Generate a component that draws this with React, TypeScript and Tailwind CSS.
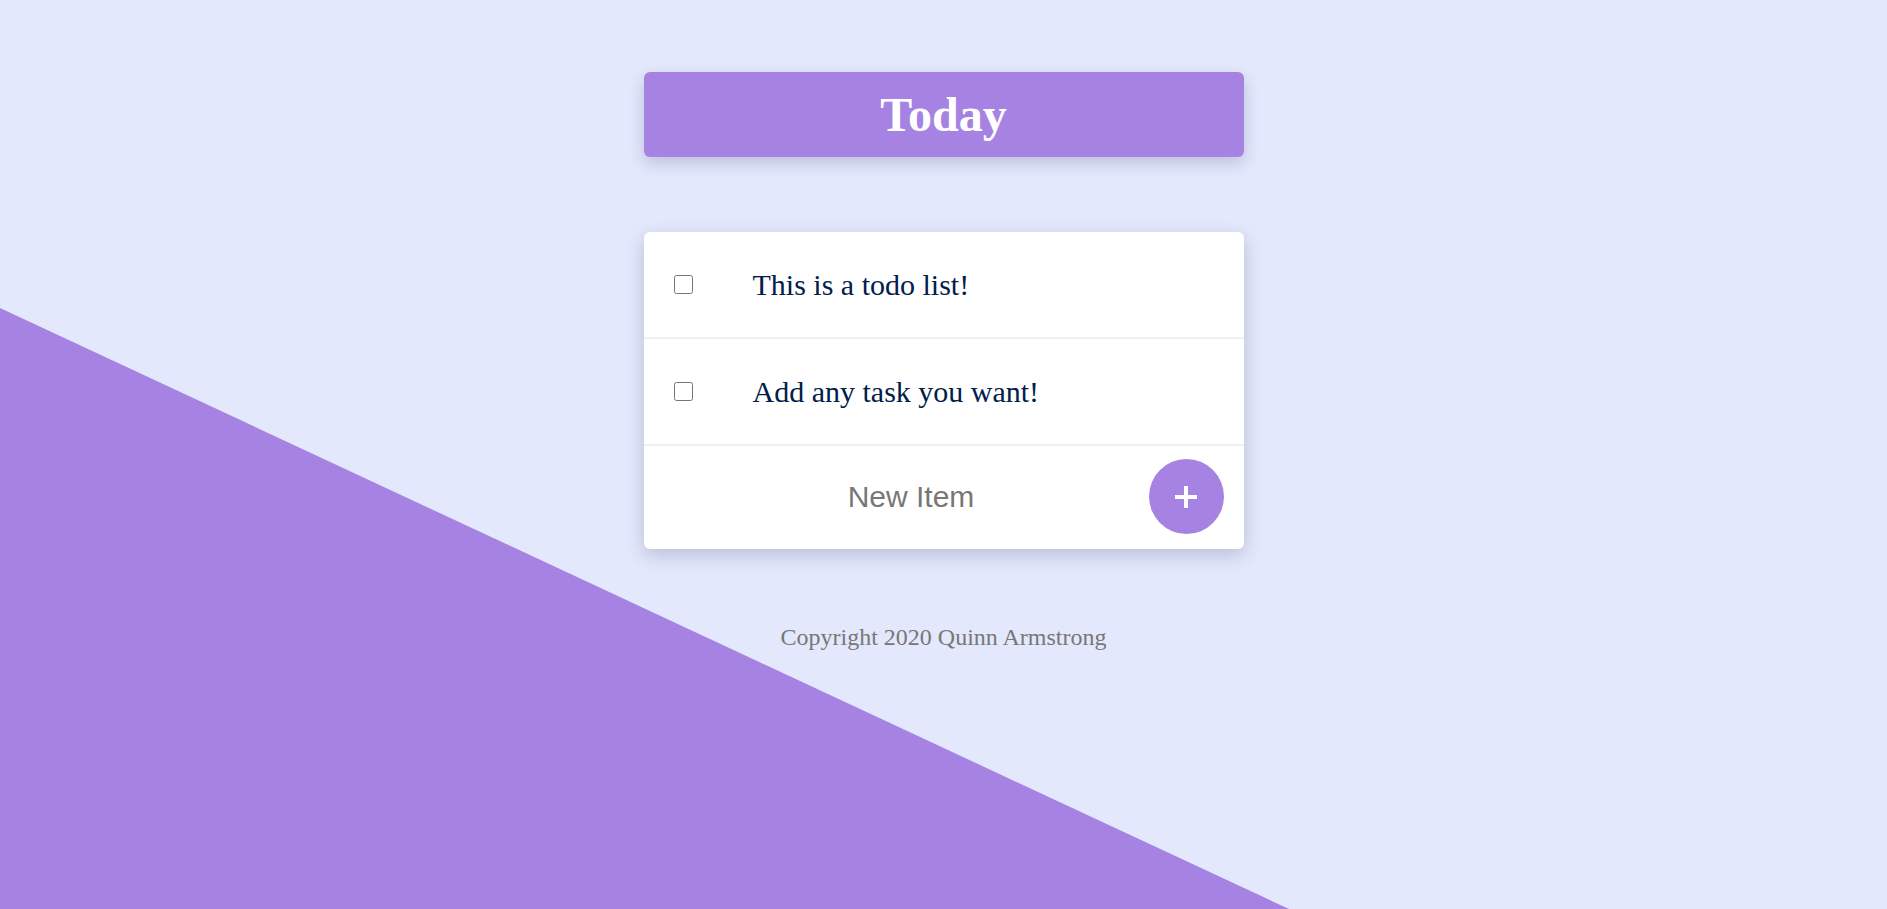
import { useState } from "react";

type Todo = { id: number; text: string; done: boolean };

const initial: Todo[] = [
  { id: 1, text: "This is a todo list!", done: false },
  { id: 2, text: "Add any task you want!", done: false },
];

export default function App() {
  const [items, setItems] = useState<Todo[]>(initial);
  const [draft, setDraft] = useState("");

  const toggle = (id: number) =>
    setItems((list) => list.map((t) => (t.id === id ? { ...t, done: !t.done } : t)));

  const add = () => {
    if (!draft.trim()) return;
    setItems((list) => [...list, { id: Date.now(), text: draft, done: false }]);
    setDraft("");
  };

  return (
    <div className="relative min-h-screen overflow-hidden bg-[#e3e8fc]">
      {/* purple wedge in the background */}
      <div className="pointer-events-none absolute inset-0 bg-[#a683e3] [clip-path:polygon(0_308px,1289px_100%,0_100%)]" />

      <div className="relative z-10 flex flex-col items-center pt-[72px]">
        <div className="flex h-[85px] w-[600px] items-center justify-center rounded-[6px] bg-[#a683e3] shadow-[0_6px_16px_rgba(40,40,90,0.2)]">
          <h1 className="font-['Liberation_Serif',serif] text-[48px] font-bold leading-none text-white">
            Today
          </h1>
        </div>

        <div className="mt-[75px] w-[600px] overflow-hidden rounded-[6px] bg-white shadow-[0_6px_18px_rgba(40,40,90,0.22)]">
          {items.map((t) => (
            <div key={t.id}>
              <div className="flex h-[105px] items-center pl-[30px]">
                <input
                  type="checkbox"
                  checked={t.done}
                  onChange={() => toggle(t.id)}
                  className="m-0 h-[19px] w-[19px]"
                />
                <p
                  className={`ml-[60px] font-['Liberation_Serif',serif] text-[30px] leading-none text-[#00204a] ${
                    t.done ? "line-through text-gray-400" : ""
                  }`}
                >
                  {t.text}
                </p>
              </div>
              <div className="h-[2px] bg-[#f0f0f0]" />
            </div>
          ))}

          <form
            className="flex h-[103px] items-center pb-[2px] pl-[30px] pr-[20px]"
            onSubmit={(e) => {
              e.preventDefault();
              add();
            }}
          >
            <input
              type="text"
              value={draft}
              onChange={(e) => setDraft(e.target.value)}
              placeholder="New Item"
              className="min-w-0 flex-1 bg-transparent text-center font-['Liberation_Sans',sans-serif] text-[30px] text-[#00204a] outline-none placeholder:text-[#777]"
            />
            <button
              type="submit"
              className="flex h-[75px] w-[75px] shrink-0 items-center justify-center rounded-full bg-[#a683e3]"
            >
              <svg width="22" height="22" viewBox="0 0 22 22">
                <path d="M11 0v22M0 11h22" stroke="white" strokeWidth="4" />
              </svg>
            </button>
          </form>
        </div>

        <footer className="mt-[70px] font-['Liberation_Serif',serif] text-[24px] leading-[36px] text-[#777]">
          Copyright 2020 Quinn Armstrong
        </footer>
      </div>
    </div>
  );
}
